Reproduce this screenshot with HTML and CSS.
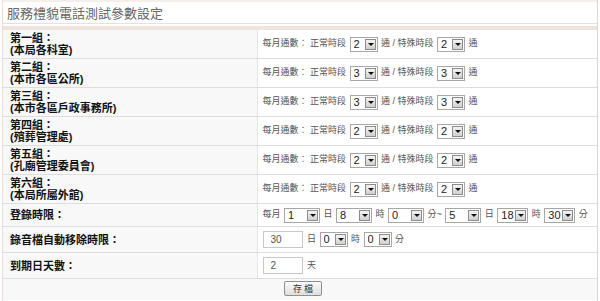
FILE: index.html
```html
<!DOCTYPE html>
<html lang="zh-Hant">
<head>
    <meta charset="UTF-8" />
    <title>服務禮貌電話測試參數設定</title>
    <link rel="stylesheet" href="styles.css">
</head>
<body>
    <div class="panel">
        <h1 class="panel-title">服務禮貌電話測試參數設定</h1>
        <div class="panel-band"></div>

        <form class="settings">
            <table class="settings-table">
                <colgroup>
                    <col class="col-label">
                    <col>
                </colgroup>
                <tr>
                    <th>第一組：<br>(本局各科室)</th>
                    <td>每月通數： 正常時段 <span class="sel"><select><option>2</option></select><span class="arrow"></span></span> 通 / 特殊時段 <span class="sel"><select><option>2</option></select><span class="arrow"></span></span> 通</td>
                </tr>
                <tr>
                    <th>第二組：<br>(本市各區公所)</th>
                    <td>每月通數： 正常時段 <span class="sel"><select><option>3</option></select><span class="arrow"></span></span> 通 / 特殊時段 <span class="sel"><select><option>3</option></select><span class="arrow"></span></span> 通</td>
                </tr>
                <tr>
                    <th>第三組：<br>(本市各區戶政事務所)</th>
                    <td>每月通數： 正常時段 <span class="sel"><select><option>3</option></select><span class="arrow"></span></span> 通 / 特殊時段 <span class="sel"><select><option>3</option></select><span class="arrow"></span></span> 通</td>
                </tr>
                <tr>
                    <th>第四組：<br>(殯葬管理處)</th>
                    <td>每月通數： 正常時段 <span class="sel"><select><option>2</option></select><span class="arrow"></span></span> 通 / 特殊時段 <span class="sel"><select><option>2</option></select><span class="arrow"></span></span> 通</td>
                </tr>
                <tr>
                    <th>第五組：<br>(孔廟管理委員會)</th>
                    <td>每月通數： 正常時段 <span class="sel"><select><option>2</option></select><span class="arrow"></span></span> 通 / 特殊時段 <span class="sel"><select><option>2</option></select><span class="arrow"></span></span> 通</td>
                </tr>
                <tr>
                    <th>第六組：<br>(本局所屬外館)</th>
                    <td>每月通數： 正常時段 <span class="sel"><select><option>2</option></select><span class="arrow"></span></span> 通 / 特殊時段 <span class="sel"><select><option>2</option></select><span class="arrow"></span></span> 通</td>
                </tr>
                <tr class="single">
                    <th>登錄時限：</th>
                    <td>每月 <span class="sel wide"><select><option>1</option></select><span class="arrow"></span></span> 日 <span class="sel wide"><select><option>8</option></select><span class="arrow"></span></span> 時 <span class="sel wide"><select><option>0</option></select><span class="arrow"></span></span> 分~ <span class="sel wide"><select><option>5</option></select><span class="arrow"></span></span> 日 <span class="sel mid"><select><option>18</option></select><span class="arrow"></span></span> 時 <span class="sel mid"><select><option>30</option></select><span class="arrow"></span></span> 分</td>
                </tr>
                <tr class="single tall">
                    <th>錄音檔自動移除時限：</th>
                    <td><input type="text" class="num" value="30"> 日 <span class="sel"><select><option>0</option></select><span class="arrow"></span></span> 時 <span class="sel"><select><option>0</option></select><span class="arrow"></span></span> 分</td>
                </tr>
                <tr class="single tall">
                    <th>到期日天數：</th>
                    <td><input type="text" class="num" value="2"> 天</td>
                </tr>
                <tr class="actions">
                    <td colspan="2"><button type="button" class="save">存 檔</button></td>
                </tr>
            </table>
        </form>
    </div>
</body>
</html>
```

FILE: styles.css
```css
body {
    margin: 0;
    background-color: #ffffff;
    font-family: "Liberation Sans", "Noto Sans CJK TC", sans-serif;
    color: #444;
}
.panel {
    width: 594px;
    margin: 0 0 0 2px;
    border-left: 1px solid #f2dcd2;
    border-right: 1px solid #d6d6d6;
    height: 301px;
    overflow: hidden;
}
.panel-title {
    margin: 0;
    padding: 3px 0 0 4px;
    height: 18px;
    font-size: 13px;
    font-weight: normal;
    color: #666;
    border-top: 2px solid #f6efe8;
    border-bottom: 1px solid #e2e2e2;
    line-height: 18px;
}
.panel-band {
    height: 4px;
    margin-top: 2px;
    background-color: #efe4da;
}
.settings {
    margin: 0;
}
.settings-table {
    width: 100%;
    table-layout: fixed;
    border-collapse: collapse;
    font-size: 11px;
}
.col-label {
    width: 254px;
}
.settings-table th {
    padding: 2px 0 2px 7px;
    text-align: left;
    font-weight: bold;
    color: #111;
    background-color: #f8f8f8;
    border-bottom: 1px solid #dddddd;
    border-right: 1px solid #e6e6e6;
    line-height: 12px;
    height: 24px;
    box-sizing: content-box;
}
.settings-table td {
    padding: 0 0 0 5px;
    font-size: 9px;
    color: #555;
    border-bottom: 1px solid #dddddd;
    white-space: nowrap;
    line-height: 14px;
}
.single th {
    height: 18px;
}
.tall th {
    height: 21px;
}
.sel {
    display: inline-flex;
    align-items: center;
    vertical-align: middle;
    height: 15px;
    border: 1px solid #a7a7a7;
    background-color: #fff;
    box-sizing: border-box;
    margin: 0 1px;
}
.sel select {
    appearance: none;
    -webkit-appearance: none;
    border: none;
    background: transparent;
    font-family: "Liberation Sans", sans-serif;
    font-size: 11px;
    color: #222;
    padding: 0 0 0 3px;
    margin: 0;
    width: 13px;
    height: 13px;
    line-height: 13px;
    outline: none;
}
.sel.wide select {
    width: 21px;
}
.sel.mid select {
    width: 16px;
}
.arrow {
    display: inline-block;
    width: 11px;
    height: 11px;
    margin: 0 1px;
    border: 1px solid #8c8c8c;
    box-sizing: border-box;
    background: linear-gradient(#f4f4f4, #cfcfcf);
    position: relative;
}
.arrow::after {
    content: "";
    position: absolute;
    left: 2px;
    top: 3px;
    border-left: 3px solid transparent;
    border-right: 3px solid transparent;
    border-top: 3px solid #111;
}
.num {
    width: 40px;
    height: 17px;
    box-sizing: border-box;
    border: 1px solid #c8c8c8;
    font-family: "Liberation Sans", sans-serif;
    font-size: 10px;
    color: #555;
    padding: 0 7px;
    vertical-align: middle;
    margin: 0 2px 0 0;
}
.actions td {
    border-bottom: none;
    background-color: #f8f8f8;
    padding: 2px 0 0 281px;
    height: 19px;
    vertical-align: top;
}
.save {
    font-family: "Noto Sans CJK TC", sans-serif;
    font-size: 9px;
    color: #333;
    width: 38px;
    height: 15px;
    padding: 0;
    line-height: 12px;
    border: 1px solid #8e8e8e;
    background: linear-gradient(#fbfbfb, #dedede);
    border-radius: 2px;
}
```
